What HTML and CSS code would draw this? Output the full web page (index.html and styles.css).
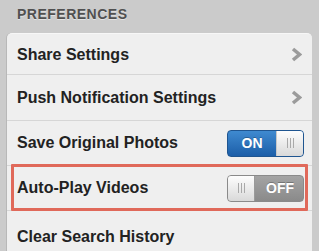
FILE: index.html
```html
<!DOCTYPE html>
<html>
<head>
    <title>Preferences</title>
    <link rel="stylesheet" href="styles.css">
</head>
<body>
    <h2 class="section-title">PREFERENCES</h2>
    <div class="card">
        <div class="row first">
            <span class="label">Share Settings</span>
            <svg class="chevron" width="11" height="15" viewBox="0 0 11 15"><polyline points="2,2 8.5,7.5 2,13" fill="none" stroke="#9b9b9b" stroke-width="3.5"/></svg>
        </div>
        <div class="row tall">
            <span class="label">Push Notification Settings</span>
            <svg class="chevron" width="11" height="15" viewBox="0 0 11 15"><polyline points="2,2 8.5,7.5 2,13" fill="none" stroke="#9b9b9b" stroke-width="3.5"/></svg>
        </div>
        <div class="row">
            <span class="label">Save Original Photos</span>
            <div class="switch on">
                <span class="switch-text">ON</span>
                <span class="knob"><i></i><i></i><i></i></span>
            </div>
        </div>
        <div class="row highlighted">
            <span class="label">Auto-Play Videos</span>
            <div class="switch off">
                <span class="knob"><i></i><i></i><i></i></span>
                <span class="switch-text">OFF</span>
            </div>
        </div>
        <div class="row last">
            <span class="label">Clear Search History</span>
        </div>
    </div>
</body>
</html>
```

FILE: styles.css
```css
body {
    margin: 0;
    background-color: #cbcbcb;
    font-family: "Liberation Sans", Arial, sans-serif;
    color: #222;
}

.section-title {
    margin: 0;
    padding-left: 17px;
    height: 28px;
    line-height: 28px;
    font-size: 14px;
    font-weight: bold;
    letter-spacing: 0.5px;
    color: #505050;
    text-shadow: 0 1px 0 #e2e2e2;
    margin-bottom: 5px;
}

.card {
    margin-left: 7px;
    width: 305px;
    background-color: #efefef;
    border-top: 1px solid #f7f7f7;
    border-radius: 5px 5px 0 0;
    box-shadow: -1px 0 0 #b8b8b8;
}

.row {
    position: relative;
    display: flex;
    align-items: center;
    justify-content: space-between;
    height: 44px;
    padding: 0 8px 0 10px;
    border-bottom: 1px solid #d6d6d6;
}

.row.first {
    height: 39px;
    padding-top: 1px;
}

.row.tall {
    height: 45px;
}

.row.last {
    height: 52px;
    border-bottom: none;
}

.label {
    font-size: 16px;
    font-weight: bold;
}

.chevron {
    margin-right: 2px;
}

/* annotation box around the auto-play row */
.highlighted::after {
    content: "";
    position: absolute;
    left: 4px;
    right: 4px;
    top: -2px;
    bottom: -1px;
    border: 3px solid #e0695a;
    border-radius: 1px;
}

.switch {
    display: flex;
    width: 77px;
    height: 27px;
    box-sizing: border-box;
    border-radius: 4px;
    overflow: hidden;
    font-size: 14px;
    font-weight: bold;
    color: white;
}

.switch.on {
    background: linear-gradient(#3f8ad0, #1c5ea8);
    border: 1px solid #1f5590;
}

.switch.off {
    background: linear-gradient(#a4a4a4, #8a8a8a);
    border: 1px solid #8a8a8a;
}

.switch-text {
    flex: 1;
    display: flex;
    align-items: center;
    justify-content: center;
    text-shadow: 0 -1px 0 rgba(0, 0, 0, 0.25);
}

.switch.off .switch-text {
    padding-left: 2px;
}

.knob {
    width: 26px;
    display: flex;
    align-items: center;
    justify-content: center;
    gap: 2px;
    background: linear-gradient(#fdfdfd, #d9d9d9);
}

.switch.on .knob {
    border-left: 1px solid #c8c8c8;
}

.switch.off .knob {
    border-right: 1px solid #9a9a9a;
}

.knob i {
    width: 1px;
    height: 10px;
    background-color: #a9a9a9;
}
```
